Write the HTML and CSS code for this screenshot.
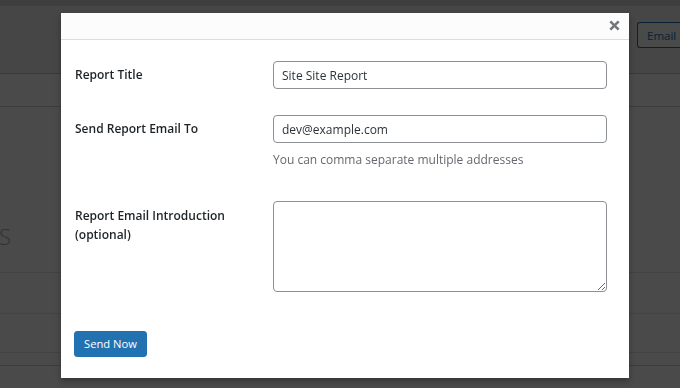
FILE: index.html
```html
<!DOCTYPE html>
<html lang="en">
<head>
<meta charset="utf-8">
<title>Email Report</title>
<link rel="stylesheet" href="styles.css">
</head>
<body>
<div class="page">
  <div class="topbar"></div>
  <header class="page-header">
    <button class="btn-outline" type="button">Email R</button>
  </header>
  <nav class="tabs"></nav>
  <section class="summary">
    <h2 class="big-title">S</h2>
  </section>
  <div class="list-row list-row--tall"></div>
  <div class="list-row list-row--mid"></div>
  <div class="list-row list-row--short"></div>
</div>

<div class="overlay"></div>

<div class="modal" role="dialog" aria-label="Email Report">
  <div class="modal-header">
    <button class="modal-close" type="button" aria-label="Close">
      <svg width="11" height="11" viewBox="0 0 11 11" aria-hidden="true">
        <path d="M1.3 1.3 L9.7 9.7 M9.7 1.3 L1.3 9.7" stroke="#72777c" stroke-width="2.6" stroke-linecap="butt" fill="none"/>
      </svg>
    </button>
  </div>
  <form class="modal-body">
    <div class="form-row">
      <label class="form-label" for="title">Report Title</label>
      <div class="form-field">
        <input class="text-input" id="title" type="text" value="Site Site Report">
      </div>
    </div>
    <div class="form-row form-row--email">
      <label class="form-label" for="email">Send Report Email To</label>
      <div class="form-field">
        <input class="text-input" id="email" type="text" value="dev@example.com">
        <p class="description">You can comma separate multiple addresses</p>
      </div>
    </div>
    <div class="form-row form-row--intro">
      <label class="form-label form-label--low" for="intro">Report Email Introduction (optional)</label>
      <div class="form-field">
        <textarea class="text-area" id="intro"></textarea>
      </div>
    </div>
    <div class="form-actions">
      <button class="btn-primary" type="button">Send Now</button>
    </div>
  </form>
</div>
</body>
</html>
```
FILE: styles.css
```css
* { box-sizing: border-box; }

html, body {
  margin: 0;
  padding: 0;
  width: 680px;
  height: 388px;
  overflow: hidden;
}

body {
  font-family: "Open Sans", "Noto Sans", sans-serif;
  background: #f7f7f7;
  position: relative;
}

/* ---------- background page ---------- */
.page {
  display: flex;
  flex-direction: column;
  width: 680px;
}

.topbar {
  height: 6px;
  background: #cfcfcf;
}

.page-header {
  height: 68px;
  background: #ececec;
  border-bottom: 1px solid #c4c4c4;
  padding: 16px 0 0 637px;
  white-space: nowrap;
  overflow: hidden;
}

.btn-outline {
  height: 26px;
  width: 60px;
  padding: 0 0 0 9px;
  text-align: left;
  border: 1px solid #2271b1;
  border-right: 0;
  border-radius: 3px 0 0 3px;
  background: #f6f7f7;
  color: #2271b1;
  font-family: inherit;
  font-size: 11.5px;
  white-space: nowrap;
}

.tabs {
  height: 33px;
  background: #f7f7f7;
  border-bottom: 1px solid #c8c8c8;
}

.summary {
  height: 166px;
  background: #f7f7f7;
  border-bottom: 1px solid #e2e2e2;
  padding-top: 114px;
}

.big-title {
  margin: 0 0 0 -1px;
  font-size: 22px;
  font-weight: 300;
  line-height: 30px;
  color: #a8a8a8;
}

.list-row {
  background: #f7f7f7;
  border-bottom: 1px solid #e2e2e2;
}
.list-row--tall { height: 41px; }
.list-row--mid { height: 39px; }
.list-row--short { height: 13px; border-bottom-color: #c8c8c8; }

.overlay {
  position: fixed;
  inset: 0;
  background: rgba(0, 0, 0, 0.7);
}

/* ---------- modal ---------- */
.modal {
  position: absolute;
  left: 61px;
  top: 13px;
  width: 568px;
  background: #fff;
  box-shadow: 0 3px 6px rgba(0, 0, 0, 0.3);
}

.modal-header {
  height: 27px;
  background: #fcfcfc;
  border-bottom: 1px solid #dddddd;
  display: flex;
  justify-content: flex-end;
  align-items: center;
  padding-right: 7px;
}

.modal-close {
  width: 16px;
  height: 16px;
  padding: 0;
  border: 0;
  background: transparent;
  display: flex;
  align-items: center;
  justify-content: center;
  margin-top: -1px;
}

.modal-body {
  margin: 0;
  padding: 21px 22px 21px 13px;
  display: flex;
  flex-direction: column;
}

.form-row {
  display: grid;
  grid-template-columns: 199px 1fr;
  align-items: start;
}

.form-row + .form-row { margin-top: 26px; }
.form-row.form-row--intro { margin-top: 32px; }

.form-label {
  padding: 4px 10px 0 1px;
  font-size: 12px;
  font-weight: 600;
  line-height: 19px;
  color: #1d2327;
}

.form-label--low { padding-top: 5px; }

.form-field {
  display: flex;
  flex-direction: column;
}

.text-input {
  height: 28px;
  width: 100%;
  margin: 0;
  padding: 0 8px;
  border: 1px solid #8c8f94;
  border-radius: 4px;
  background: #fff;
  font-family: inherit;
  font-size: 12px;
  color: #2c3338;
}

.description {
  margin: 7px 0 0;
  font-size: 12px;
  line-height: 19px;
  color: #646970;
}

.text-area {
  display: block;
  width: 100%;
  height: 91px;
  margin: 0;
  padding: 4px 8px;
  border: 1px solid #8c8f94;
  border-radius: 4px;
  font-family: inherit;
  font-size: 12px;
  color: #2c3338;
}

.form-actions {
  margin-top: 39px;
  display: flex;
}

.btn-primary {
  height: 26px;
  padding: 0 9px;
  border: 1px solid #2271b1;
  border-radius: 3px;
  background: #2271b1;
  color: #fff;
  font-family: inherit;
  font-size: 11.2px;
  line-height: 24px;
}
```
